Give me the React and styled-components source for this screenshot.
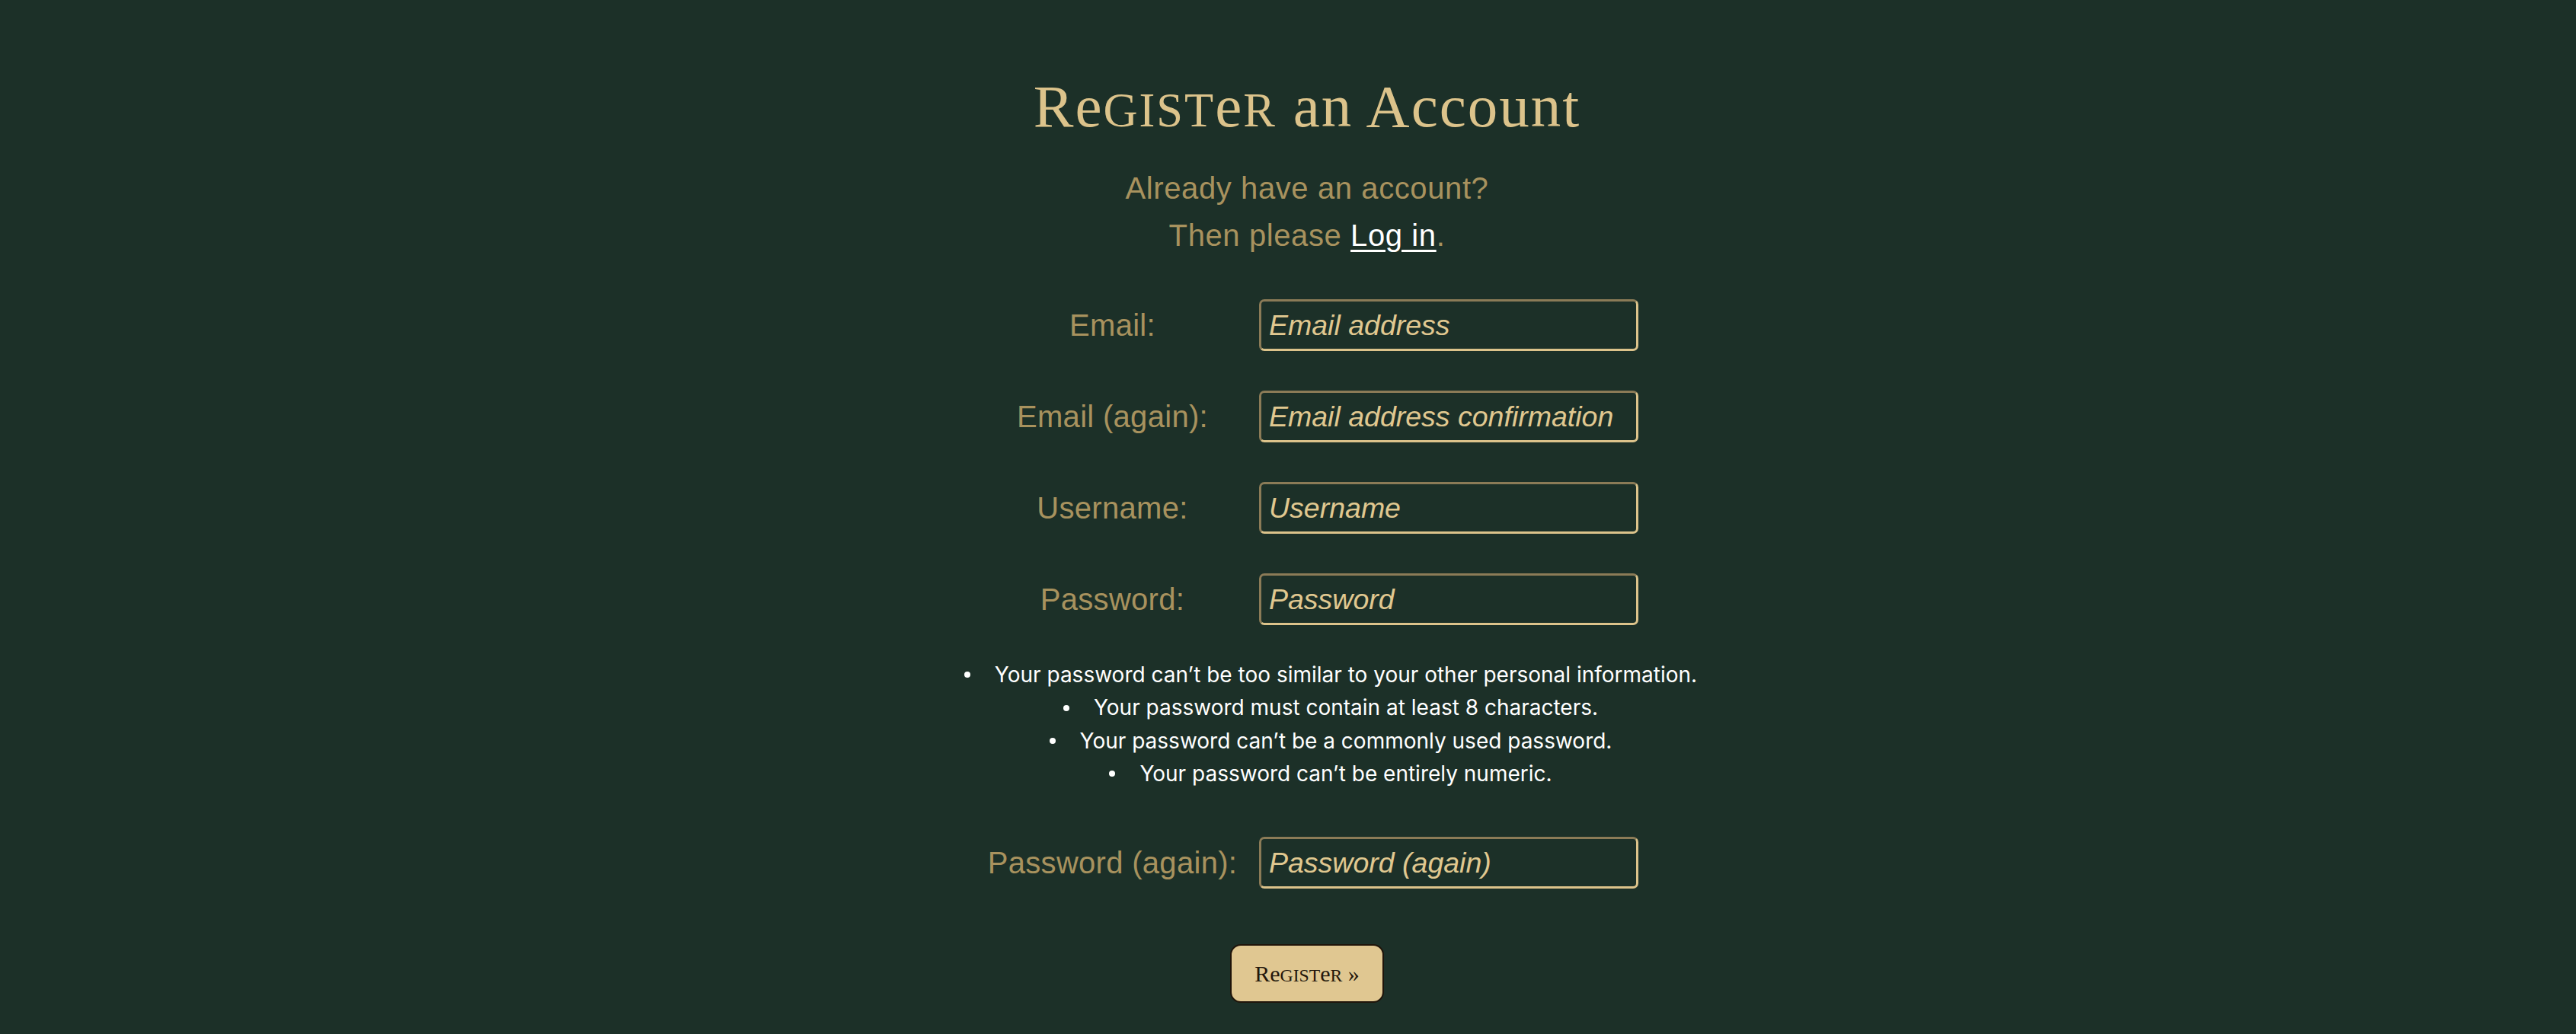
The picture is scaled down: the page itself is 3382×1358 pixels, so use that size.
import styled, { createGlobalStyle } from "styled-components";

const GlobalStyle = createGlobalStyle`
  body {
    margin: 0;
    background: #1c3028;
  }
`;

const Page = styled.div`
  display: flex;
  flex-direction: column;
  align-items: center;
  padding-left: 50px;
  padding-bottom: 40px;
  min-height: 1358px;
  box-sizing: border-box;
`;

const Title = styled.h1`
  margin: 94px 0 0;
  font-family: "Liberation Serif", serif;
  font-weight: 400;
  font-size: 79px;
  line-height: 91px;
  letter-spacing: 2px;
  color: #dcc38b;
`;

const Sc = styled.span`
  text-transform: uppercase;
  font-size: 0.79em;
`;

const Intro = styled.p`
  margin: 26px 0 0;
  font-family: "Liberation Sans", Arial, sans-serif;
  font-size: 40px;
  line-height: 62px;
  letter-spacing: 0.6px;
  color: #a8925e;
  text-align: center;

  a {
    color: #ffffff;
    text-decoration: underline;
    text-underline-offset: 5px;
    text-decoration-thickness: 3px;
  }
`;

const Form = styled.form`
  display: flex;
  flex-direction: column;
  align-items: center;
`;

const Fields = styled.div`
  display: grid;
  grid-template-columns: 337px 498px;
  column-gap: 24px;
  row-gap: 52px;
  align-items: center;
  margin-top: ${(p) => p.$top}px;
  padding-left: 11px;
`;

const Label = styled.label`
  font-family: "Liberation Sans", Arial, sans-serif;
  font-size: 40px;
  color: #a8925e;
  text-align: center;
  white-space: nowrap;
  letter-spacing: 0.3px;
`;

const Input = styled.input`
  box-sizing: border-box;
  width: 498px;
  height: 68px;
  padding: 0 10px;
  background: transparent;
  border: 3px solid;
  border-color: #8b7b57 #dcc38b #dcc38b #8b7b57;
  border-radius: 7px;
  font-family: "Liberation Sans", Arial, sans-serif;
  font-size: 37.5px;
  color: #e0c890;
  outline: none;

  &::placeholder {
    color: #e0c890;
    font-style: italic;
    opacity: 1;
  }
`;

const HelpList = styled.ul`
  list-style: none;
  margin: 44px 0 0;
  padding: 0 0 0 62px;
  font-family: Inter, "Liberation Sans", sans-serif;
  font-size: 28px;
  line-height: 43.3px;
  color: #ffffff;
  text-align: center;
`;

const HelpItem = styled.li`
  &::before {
    content: "";
    display: inline-block;
    width: 8px;
    height: 8px;
    border-radius: 50%;
    background: #ffffff;
    margin-right: 32px;
    vertical-align: middle;
    position: relative;
    top: -2px;
  }
`;

const Submit = styled.button`
  margin-top: 73px;
  width: 202px;
  height: 77px;
  background: #e0c791;
  border: 2px solid #1f140a;
  border-radius: 14px;
  font-family: "Liberation Serif", serif;
  font-size: 30px;
  color: #24170c;
  cursor: pointer;
`;

const rules = [
  "Your password can’t be too similar to your other personal information.",
  "Your password must contain at least 8 characters.",
  "Your password can’t be a commonly used password.",
  "Your password can’t be entirely numeric.",
];

const fields = [
  { id: "email", label: "Email:", placeholder: "Email address", type: "email" },
  { id: "email2", label: "Email (again):", placeholder: "Email address confirmation", type: "email" },
  { id: "username", label: "Username:", placeholder: "Username", type: "text" },
  { id: "password", label: "Password:", placeholder: "Password", type: "password" },
];

export default function App() {
  return (
    <>
      <GlobalStyle />
      <Page>
        <Title>
          R<span>e</span>
          <Sc>gist</Sc>e<Sc>r</Sc> an Account
        </Title>
        <Intro>
          Already have an account?
          <br />
          Then please <a href="#login">Log in</a>.
        </Intro>

        <Form onSubmit={(e) => e.preventDefault()}>
          <Fields $top={53}>
            {fields.map((f) => [
              <Label key={f.id + "-l"} htmlFor={f.id}>
                {f.label}
              </Label>,
              <Input key={f.id} id={f.id} type={f.type} placeholder={f.placeholder} />,
            ])}
          </Fields>

          <HelpList>
            {rules.map((r) => (
              <HelpItem key={r}>{r}</HelpItem>
            ))}
          </HelpList>

          <Fields $top={61}>
            <Label htmlFor="password2">Password (again):</Label>
            <Input id="password2" type="password" placeholder="Password (again)" />
          </Fields>

          <Submit type="submit">
            R<span>e</span>
            <Sc>gist</Sc>e<Sc>r</Sc> »
          </Submit>
        </Form>
      </Page>
    </>
  );
}
